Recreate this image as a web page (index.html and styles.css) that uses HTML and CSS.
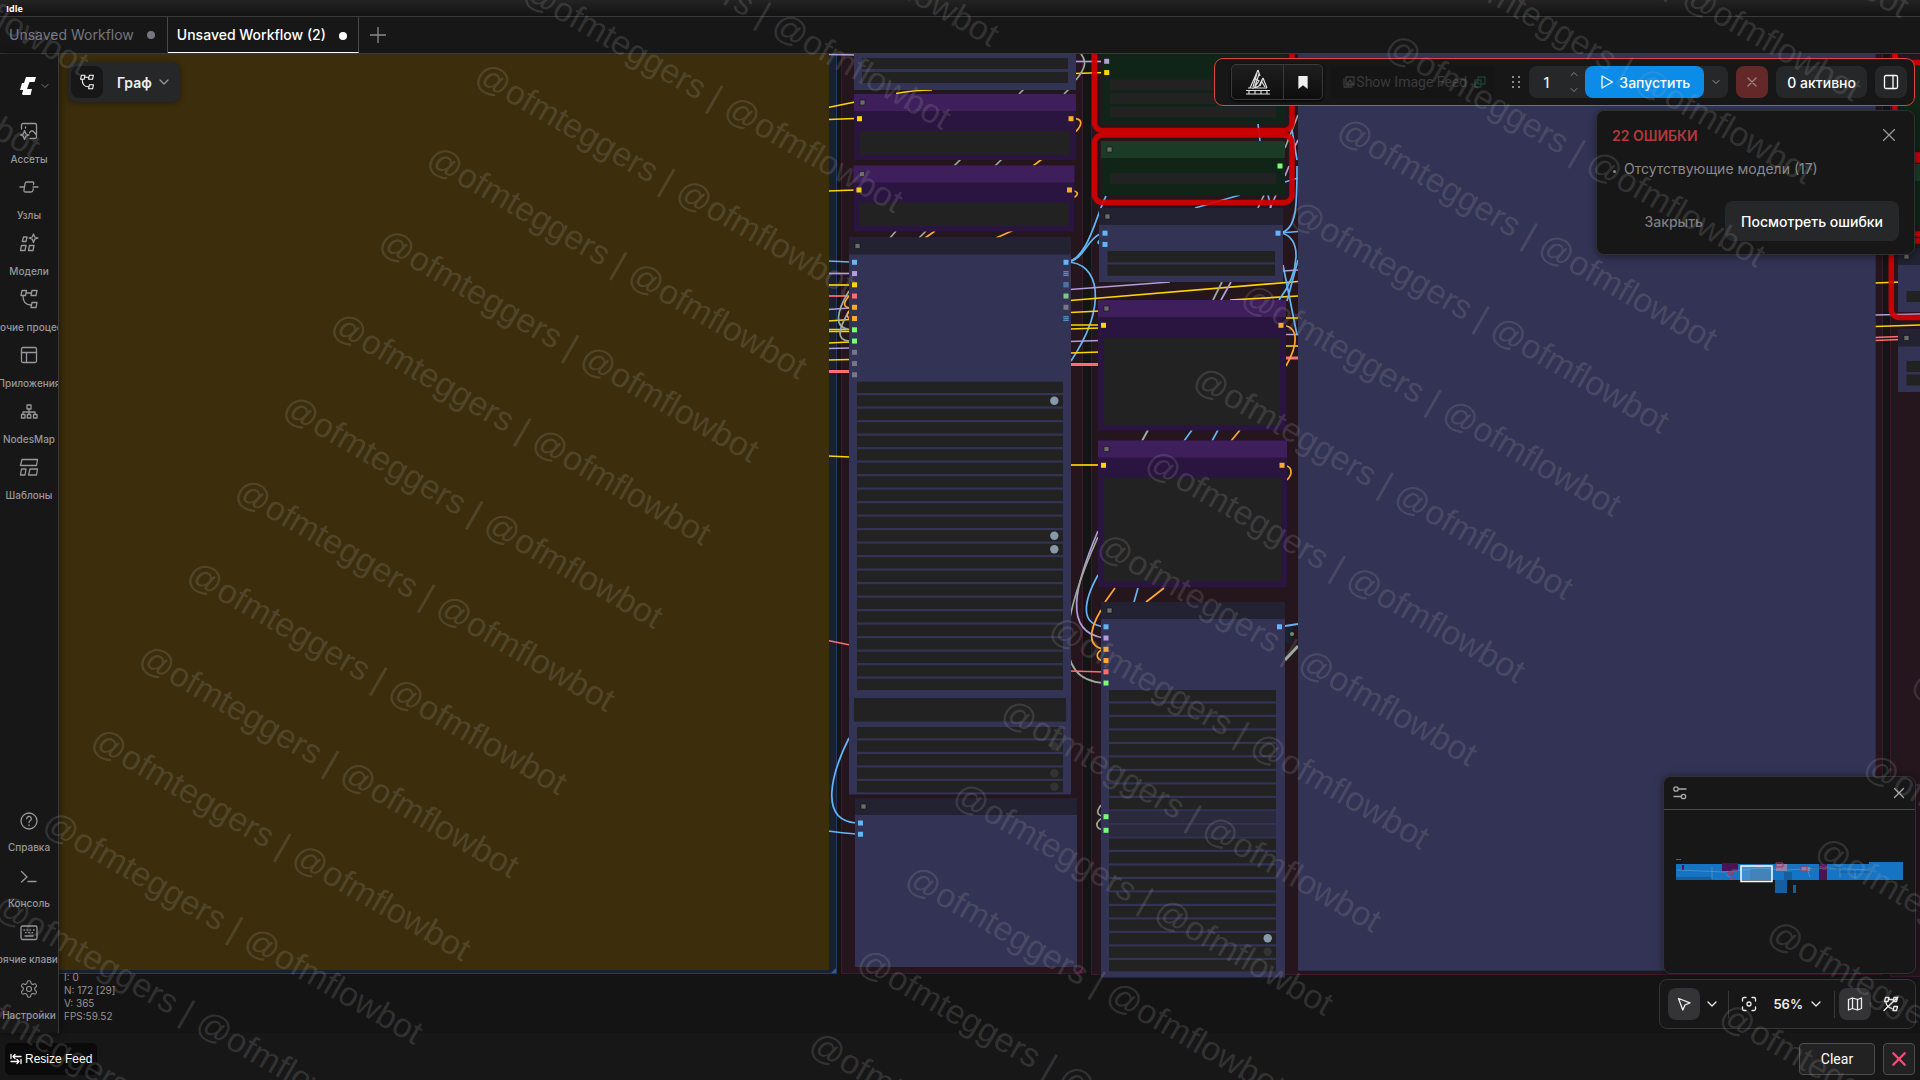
FILE: index.html
```html
<!DOCTYPE html>
<html lang="ru">
<head>
    <meta charset="UTF-8">
    <meta name="viewport" content="width=device-width, initial-scale=1.0">
    <title>Unsaved Workflow (2)</title>
    <link rel="stylesheet" href="styles.css">
</head>
<body>

    <div class="status-line">Idle</div>

    <nav class="tabs">
        <button class="tab">Unsaved Workflow <span class="dot"></span></button>
        <button class="tab active">Unsaved Workflow (2) <span class="dot"></span></button>
        <button class="tab-add" aria-label="Новая вкладка">
            <svg class="icon" viewBox="0 0 16 16"><path d="M8 0v16M0 8h16"/></svg>
        </button>
    </nav>

    <main class="workspace">
        <aside class="sidebar">
            <button class="logo" aria-label="Меню">
                <svg class="logo-mark" viewBox="0 0 16 18"><path d="M6 0h10l-1.500 5H9.500L7 12h5l-1.500 6H3l-1-1 1.200-4H0l2-7h2z"/></svg>
                <svg class="icon tiny" viewBox="0 0 8 8"><path d="M1 2.500l3 3 3-3"/></svg>
            </button>

            <button class="side-item">
                <svg class="icon" viewBox="0 0 20 20"><path d="M2.500 8V4a1.500 1.500 0 0 1 1.500-1.500h12A1.500 1.500 0 0 1 17.500 4v12a1.500 1.500 0 0 1-1.500 1.500H11M10.500 12c1-2.500 3-3 4.500-1l2.500 3M6.500 6v1M5.500 9.500L7 13 10 14 7 15.200 5.500 18.500 4.300 15.200 1.500 14 4.300 13z"/></svg>
                <span>Ассеты</span>
            </button>
            <button class="side-item">
                <svg class="icon" viewBox="0 0 20 20"><path d="M1 10h4M14 10h5M14.500 7.500L14.800 6a1 1 0 0 0-1-1H8a2 2 0 0 0-2 1.600L5 13a1.500 1.500 0 0 0 1.500 2H12a2 2 0 0 0 2-1.600l.3-1.400"/></svg>
                <span>Узлы</span>
            </button>
            <button class="side-item">
                <svg class="icon" viewBox="0 0 20 20"><path d="M4.500 4h3.500l-1 4.500H3.300zM2.500 12.500h4.500l-1 5H1.500zM10.500 12.500H15l-1 5H9.500zM14.500 1l1.200 3 3.300 1-3.300 1.200-1.200 3.300-1.200-3.300L10 5l3.300-1z"/></svg>
                <span>Модели</span>
            </button>
            <button class="side-item">
                <svg class="icon" viewBox="0 0 20 20"><path d="M3 1.500h4.500l-1 5H2zM13 1.500h5l-1 5h-5zM13 13.500h5l-1 5h-5zM7 4h5M4 7c0 5 2 9 8 9"/></svg>
                <span>Рабочие процессы</span>
            </button>
            <button class="side-item">
                <svg class="icon" viewBox="0 0 20 20"><rect x="2.500" y="2.500" width="15" height="15" rx="1.500"/><path d="M2.500 7.500h15M7.500 7.500v10"/></svg>
                <span>Приложения</span>
            </button>
            <button class="side-item">
                <svg class="icon" viewBox="0 0 20 20"><path d="M8 4h4v4H8zM2.500 13.500h3.500V17H2.500zM8.300 13.500h3.500V17H8.300zM14.500 13.500H18V17h-3.500zM10 8v5M4 13v-2h12v2"/></svg>
                <span>NodesMap</span>
            </button>
            <button class="side-item">
                <svg class="icon" viewBox="0 0 20 20"><path d="M3 2.500h15.500l-1 6H1.500zM2.500 12H7l-1 6H1.500zM11 12h7.500l-1 6H9.500z"/></svg>
                <span>Шаблоны</span>
            </button>

            <div class="side-bottom">
                <button class="side-item">
                    <svg class="icon" viewBox="0 0 20 20"><circle cx="10" cy="10" r="8"/><path d="M7.700 7.800a2.300 2.300 0 1 1 3.400 2c-.8.500-1.100.9-1.100 1.700M10 14v.6"/></svg>
                    <span>Справка</span>
                </button>
                <button class="side-item">
                    <svg class="icon" viewBox="0 0 20 20"><path d="M2.500 4.500L8 10l-5.500 5M9 14.500h8"/></svg>
                    <span>Консоль</span>
                </button>
                <button class="side-item">
                    <svg class="icon" viewBox="0 0 20 20"><rect x="2" y="3" width="16" height="13.500" rx="1.500"/><path d="M5 7h.6M8 7h.6M11 7h.6M14.500 7h.6M6.500 9.700h.6M9.700 9.700h.6M13 9.700h.6M6 13h8"/></svg>
                    <span>Горячие клавиши</span>
                </button>
                <button class="side-item">
                    <svg class="icon" viewBox="0 0 24 24"><path d="M12.200 2h-.4a2 2 0 0 0-2 2v.2a2 2 0 0 1-1 1.700l-.4.300a2 2 0 0 1-2 0l-.2-.1a2 2 0 0 0-2.700.7l-.2.400a2 2 0 0 0 .7 2.700l.2.100a2 2 0 0 1 1 1.700v.5a2 2 0 0 1-1 1.700l-.2.100a2 2 0 0 0-.7 2.700l.2.400a2 2 0 0 0 2.700.7l.2-.1a2 2 0 0 1 2 0l.4.300a2 2 0 0 1 1 1.700v.2a2 2 0 0 0 2 2h.4a2 2 0 0 0 2-2v-.2a2 2 0 0 1 1-1.700l.4-.3a2 2 0 0 1 2 0l.2.100a2 2 0 0 0 2.700-.7l.2-.4a2 2 0 0 0-.7-2.700l-.2-.1a2 2 0 0 1-1-1.700v-.5a2 2 0 0 1 1-1.700l.2-.1a2 2 0 0 0 .7-2.700l-.2-.4a2 2 0 0 0-2.700-.7l-.2.100a2 2 0 0 1-2 0l-.4-.3a2 2 0 0 1-1-1.700V4a2 2 0 0 0-2-2z"/><circle cx="12" cy="12" r="3"/></svg>
                    <span>Настройки</span>
                </button>
            </div>
        </aside>

        <section class="canvas">
            <svg class="graph" id="graph" aria-hidden="true"></svg>

            <div class="breadcrumb">
                <button class="crumb-icon" aria-label="Рабочий процесс">
                    <svg class="icon" viewBox="0 0 20 20"><path d="M3 1.500h4.500l-1 5H2zM13 1.500h5l-1 5h-5zM13 13.500h5l-1 5h-5zM7 4h5M4 7c0 5 2 9 8 9"/></svg>
                </button>
                <button class="crumb-name">Граф
                    <svg class="icon small" viewBox="0 0 12 12"><path d="M2 4l4 4 4-4"/></svg>
                </button>
            </div>

            <div class="stats">
                <div>I: 0</div>
                <div>N: 172 [29]</div>
                <div>V: 365</div>
                <div>FPS:59.52</div>
            </div>

            <div class="top-panels">
                <div class="actionbar">
                    <div class="group-dark">
                        <button aria-label="Crystools">
                            <svg class="art" viewBox="0 0 26 26"><path d="M13 1L5 19M13 1l2 6M12 4L8 18M14 5l-4 12M11 10l3 2-5 7 5-2 4-8-3 8M18 9l4 10M17 13l3 5M3 19h19M1 21.500h24M1 25h24M4 21v4M10 21v4M16 21v4M22 21v4"/></svg>
                        </button>
                        <button aria-label="Закладка">
                            <svg class="bookmark" viewBox="0 0 10 14"><path d="M0 0h10v14l-5-4-5 4z"/></svg>
                        </button>
                    </div>
                    <button class="feed-toggle">
                        <svg class="icon small" viewBox="0 0 12 12"><path d="M3 1h8v8H3zM1 3v8h8M4 8l3-4 3 4z"/></svg>Show Image Feed
                        <svg class="icon small feed-mark" viewBox="0 0 12 12"><path d="M4 1h7v7H4zM1 4h6v7H1z"/></svg>
                    </button>
                    <svg class="grip" viewBox="0 0 10 14"><path d="M1 1h2v2H1zM7 1h2v2H7zM1 6h2v2H1zM7 6h2v2H7zM1 11h2v2H1zM7 11h2v2H7z"/></svg>
                    <div class="run-group">
                        <input class="count" type="text" value="1" aria-label="Количество запусков">
                        <div class="spin">
                            <button aria-label="Больше"><svg class="icon tiny" viewBox="0 0 8 8"><path d="M1 5.500l3-3 3 3"/></svg></button>
                            <button aria-label="Меньше"><svg class="icon tiny" viewBox="0 0 8 8"><path d="M1 2.500l3 3 3-3"/></svg></button>
                        </div>
                        <button class="run">
                            <svg class="icon" viewBox="0 0 16 16"><path d="M3 2l10.500 6L3 14z"/></svg>Запустить
                        </button>
                        <button class="run-more" aria-label="Ещё"><svg class="icon tiny" viewBox="0 0 8 8"><path d="M1 2.500l3 3 3-3"/></svg></button>
                    </div>
                    <button class="stop" aria-label="Остановить"><svg class="icon small" viewBox="0 0 12 12"><path d="M2 2l8 8M10 2l-8 8"/></svg></button>
                    <button class="active-jobs">0 активно</button>
                    <button class="panel-btn" aria-label="Панель"><svg class="icon" viewBox="0 0 16 16"><rect x="1.500" y="1.500" width="13" height="13" rx="1.500"/><path d="M10 1.500v13"/></svg></button>
                </div>

                <div class="error-box">
                    <div class="error-head">
                        <h2>22 ОШИБКИ</h2>
                        <button aria-label="Закрыть"><svg class="icon small" viewBox="0 0 12 12"><path d="M.5.500l11 11M11.500.500l-11 11"/></svg></button>
                    </div>
                    <ul>
                        <li>Отсутствующие модели (17)</li>
                    </ul>
                    <div class="error-actions">
                        <button class="dismiss">Закрыть</button>
                        <button class="view">Посмотреть ошибки</button>
                    </div>
                </div>
            </div>

            <div class="bottom-panels">
                <div class="minimap">
                    <div class="minimap-head">
                        <button aria-label="Параметры"><svg class="icon" viewBox="0 0 16 16"><circle cx="4" cy="4" r="2.200"/><circle cx="11.500" cy="11.500" r="2.200"/><path d="M6.500 4H14M2 11.500h7"/></svg></button>
                        <button aria-label="Закрыть"><svg class="icon small" viewBox="0 0 12 12"><path d="M1.500 1.500l9 9M10.500 1.500l-9 9"/></svg></button>
                    </div>
                    <svg class="map" viewBox="0 0 251 163">
                        <g fill="#1574c4">
                            <path d="M12 49h5v1h-5zM12 54h193v16H12zM205 52h34v18h-34z"/>
                        </g>
                        <path fill="#155f9e" d="M12 67h36v3H12zM86 56h22v14H86zM111 70h12v13h-12zM129 75h3v8h-3zM120 62h8v8h-8z"/>
                        <path fill="#4a1454" d="M58 53h16v8H58zM155 54h8v16h-8zM18 55h2v5h-2z"/>
                        <path fill="#8d7fa6" d="M112 54h11v7h-11zM137 57h9v4h-9z"/>
                        <path d="M13 60L60 62 95 58 120 60 160 58 205 60M48 57v12M62 64l6 5M143 58l3 9M176 56v12M191 60v9" stroke="#6f9fc4" stroke-width=".6" fill="none"/>
                        <path d="M64 62h5v3h-5zM68 60h6M66 68h6M91 55h7M112 53h7v4h-7zM137 56h6v5h-6zM156 56l6 3M158 59h4" stroke="#b0305a" stroke-width="1" fill="none"/>
                        <path d="M148 58h30M176 62h30" stroke="#2a5273" stroke-width=".8"/>
                        <rect x="77" y="56" width="31" height="15.500" fill="#86b9e3" fill-opacity=".4" stroke="#fff" stroke-width="1.500"/>
                    </svg>
                </div>

                <div class="controls">
                    <button class="tool on" aria-label="Выбор"><svg class="icon" viewBox="0 0 16 16"><path d="M2.500 2.500l11.500 4.300-5 2.200-2.200 5z"/></svg></button>
                    <button class="caret" aria-label="Режим"><svg class="icon small" viewBox="0 0 12 12"><path d="M2 4l4 4 4-4"/></svg></button>
                    <span class="sep"></span>
                    <button class="tool" aria-label="Вписать"><svg class="icon" viewBox="0 0 16 16"><path d="M1.500 5V3A1.500 1.500 0 0 1 3 1.500h2M11 1.500h2A1.500 1.500 0 0 1 14.500 3v2M14.500 11v2a1.500 1.500 0 0 1-1.500 1.500h-2M5 14.500H3A1.500 1.500 0 0 1 1.500 13v-2"/><circle cx="8" cy="8" r="2"/></svg></button>
                    <button class="zoom">56% <svg class="icon small" viewBox="0 0 12 12"><path d="M2 4l4 4 4-4"/></svg></button>
                    <span class="sep"></span>
                    <button class="tool on" aria-label="Миникарта"><svg class="icon" viewBox="0 0 16 16"><path d="M1.500 3.500L5.500 2l5 1.500 4-1.500v10.500l-4 1.500-5-1.500-4 1.500zM5.500 2v10.500M10.500 3.500V14"/></svg></button>
                    <button class="tool links" aria-label="Скрыть связи"><svg class="icon" viewBox="0 0 16 16"><path d="M2.500 1.500h3.500l-1 4H1.500zM11 1.500h3.500l-1 4H10zM11 10.500h3.500l-1 4H10zM5.500 3.500H10M3 6c0 3 1 5 6 6.500M15 1L1 14.500"/></svg></button>
                </div>
            </div>
        </section>
    </main>

    <footer class="feed-bar">
        <button class="resize">
            <svg class="icon small" viewBox="0 0 12 12"><path d="M1 1.500v4M11 3.500H3M5 1.500l-2 2 2 2M11 6.500v4M1 8.500h8M7 6.500l2 2-2 2"/></svg>
            Resize Feed
        </button>
        <div class="feed-actions">
            <button class="clear">Clear</button>
            <button class="close" aria-label="Закрыть ленту"><svg class="icon" viewBox="0 0 14 14"><path d="M2 2l10 10M12 2L2 12"/></svg></button>
        </div>
    </footer>

    <div class="watermark" aria-hidden="true"><div class="marks" id="marks"></div></div>

    <script src="graph.js"></script>
</body>
</html>
```
FILE: styles.css
```css
* {
    box-sizing: border-box;
}
body {
    margin: 0;
    height: 100vh;
    display: flex;
    flex-direction: column;
    overflow: hidden;
    position: relative;
    background: #171718;
    color: #fff;
    font-family: Inter, "Noto Sans", sans-serif;
    font-size: 14px;
}
button {
    display: flex;
    align-items: center;
    justify-content: center;
    padding: 0;
    border: none;
    background: none;
    color: inherit;
    font: inherit;
    white-space: nowrap;
    cursor: pointer;
}
svg {
    flex: none;
}
.icon {
    width: 16px;
    height: 16px;
    fill: none;
    stroke: currentColor;
    stroke-width: 1.3;
    stroke-linecap: round;
    stroke-linejoin: round;
}
.icon.small {
    width: 12px;
    height: 12px;
}
.icon.tiny {
    width: 8px;
    height: 8px;
    stroke-width: 1;
}

/* header */
.status-line {
    height: 16px;
    padding-left: 6px;
    background: linear-gradient(#232323, #131313);
    font: bold 9px/17px "Open Sans", sans-serif;
}
.tabs {
    display: flex;
    height: 38px;
    border-top: 1px solid #3a3a3c;
    border-bottom: 1px solid #3a3a3c;
}
.tab {
    gap: 12px;
    padding: 0 11px 2px 9px;
    border-right: 1px solid #4a4a4d;
    color: #76767e;
}
.tab.active {
    padding: 0 10px 0 9px;
    color: #fff;
    font-weight: 500;
    border-bottom: 1px solid #fff;
}
.dot {
    width: 8px;
    height: 8px;
    margin: 2px 1px 0;
    border-radius: 50%;
    background: currentColor;
}
.tab-add {
    width: 38px;
    color: #8a8a8a;
}

/* sidebar */
.workspace {
    flex: 1;
    display: flex;
    min-height: 0;
}
.sidebar {
    width: 59px;
    display: flex;
    flex-direction: column;
    border-right: 1px solid #39393c;
    box-shadow: 0 0 8px rgba(0, 0, 0, 0.6);
    z-index: 1;
}
.logo {
    height: 64px;
    gap: 5px;
    padding-left: 11px;
    color: #777;
}
.logo-mark {
    width: 16px;
    height: 18px;
    fill: #fff;
}
.side-item {
    height: 56px;
    width: 100%;
    flex-direction: column;
    justify-content: flex-start;
    gap: 11px;
    padding-top: 3px;
    overflow: hidden;
    color: #98989a;
    font-size: 10px;
    font-weight: 500;
    line-height: 14px;
}
.side-item .icon {
    width: 20px;
    height: 20px;
}
.side-bottom {
    margin-top: auto;
    padding-bottom: 1px;
}
.side-bottom .side-item {
    gap: 9px;
}

/* canvas */
.canvas {
    flex: 1;
    position: relative;
    min-width: 0;
    overflow: hidden;
    background: #141414;
}
.graph {
    position: absolute;
    width: 100%;
    height: 100%;
}
.breadcrumb {
    position: absolute;
    top: 8px;
    left: 9px;
    display: flex;
    align-items: center;
    padding: 4px 4px 4px 3px;
    border-radius: 8px;
    background: #262729;
    box-shadow: 0 1px 6px rgba(0, 0, 0, 0.4);
}
.crumb-icon {
    width: 32px;
    height: 32px;
    border-radius: 8px;
    background: #171718;
}
.crumb-name {
    gap: 6px;
    padding: 0 6px 0 14px;
    color: #eee;
    font-size: 14px;
    font-weight: 600;
}
.crumb-name .icon {
    color: #999;
}
.stats {
    position: absolute;
    left: 5px;
    bottom: 10px;
    color: #949494;
    font-size: 10px;
    line-height: 13px;
}

/* floating panels at the top */
.top-panels {
    position: absolute;
    top: 4px;
    right: 5px;
    display: flex;
    flex-direction: column;
    align-items: flex-end;
    gap: 4px;
}
.actionbar {
    height: 48px;
    display: flex;
    align-items: center;
    gap: 8px;
    padding: 0 7px 0 16px;
    border: 1px solid #d9453f;
    border-radius: 9px;
    background: #171718;
    font-weight: 500;
}
.actionbar button {
    height: 32px;
}
.group-dark {
    display: flex;
    border: 1px solid #3a3a3a;
    border-radius: 5px;
    background: linear-gradient(#1e1e1e, #0d0d0d);
    box-shadow: 0 1px 3px #000;
}
.actionbar .group-dark button {
    width: 38px;
    height: 34px;
}
.actionbar .group-dark button:first-child {
    width: 52px;
    border-right: 1px solid #3a3a3a;
}
.art {
    width: 26px;
    height: 26px;
    fill: none;
    stroke: #ddd;
    stroke-width: 1.2;
}
.bookmark {
    width: 10px;
    height: 13px;
    fill: #eee;
}
.feed-toggle {
    width: 163px;
    justify-content: flex-start;
    padding-left: 12px;
    gap: 1px;
    border-radius: 4px;
    background: #151516;
    color: #3b3b3b;
    font: 14px Roboto, sans-serif;
}
.feed-mark {
    margin-left: 6px;
    color: #1d3f35;
}
.grip {
    width: 10px;
    height: 14px;
    margin: 0 0 0 9px;
    fill: #8a8a8a;
}
.run-group {
    display: flex;
    align-items: center;
    border-radius: 8px;
    background: #262729;
    overflow: hidden;
}
.count {
    width: 34px;
    height: 32px;
    padding: 0;
    border: none;
    background: none;
    color: #eee;
    font: inherit;
    text-align: center;
}
.spin {
    width: 22px;
    display: flex;
    flex-direction: column;
    align-items: center;
    color: #888;
}
.actionbar .spin button {
    width: 20px;
    height: 16px;
}
.run {
    width: 119px;
    gap: 4px;
    border-radius: 8px;
    background: #0b8ce9;
}
.run-more {
    width: 24px;
    color: #999;
}
.stop {
    width: 32px;
    border-radius: 8px;
    background: #642828;
    color: #a08080;
}
.active-jobs {
    padding: 0 11px;
    border-radius: 8px;
    background: #262729;
}
.panel-btn {
    width: 32px;
    border-radius: 8px;
    background: #262729;
}
.error-box {
    width: 319px;
    padding: 12px 15px 13px;
    border: 1px solid #303032;
    border-radius: 8px;
    background: #171718;
    box-shadow: 0 2px 8px rgba(0, 0, 0, 0.4);
}
.error-head {
    display: flex;
    align-items: center;
    justify-content: space-between;
    height: 24px;
}
.error-head h2 {
    margin: 0;
    color: #b33a3a;
    font-size: 14px;
    font-weight: 600;
}
.error-head button {
    width: 20px;
    height: 24px;
    color: #999;
}
.error-box ul {
    margin: 12px 0 22px;
    padding-left: 12px;
    color: #8a8a8a;
    line-height: 20px;
}
.error-box li {
    list-style: none;
    position: relative;
}
.error-box li::before {
    content: "";
    position: absolute;
    left: -11px;
    top: 11px;
    width: 3px;
    height: 3px;
    border-radius: 50%;
    background: currentColor;
}
.error-actions {
    display: flex;
    justify-content: flex-end;
    gap: 6px;
}
.error-actions button {
    height: 40px;
    padding: 0 16px;
    border-radius: 8px;
    font-weight: 500;
}
.error-actions .dismiss {
    color: #7d7d7f;
}
.error-actions .view {
    background: #262729;
}

/* floating panels at the bottom */
.bottom-panels {
    position: absolute;
    right: 4px;
    bottom: 4px;
    display: flex;
    flex-direction: column;
    align-items: flex-end;
    gap: 5px;
}
.minimap {
    width: 253px;
    border: 1px solid #303032;
    border-radius: 8px;
    background: #171718;
    box-shadow: 0 0 8px rgba(0, 0, 0, 0.4);
    overflow: hidden;
}
.minimap-head {
    height: 33px;
    display: flex;
    align-items: center;
    justify-content: space-between;
    padding: 0 10px 0 8px;
    border-bottom: 1px solid #4a4a4c;
    color: #aaa;
}
.map {
    display: block;
    width: 100%;
}
.controls {
    display: flex;
    align-items: center;
    height: 50px;
    padding: 0 8px;
    border: 1px solid #353537;
    border-radius: 8px;
    background: #171718;
    color: #eee;
}
.tool {
    width: 32px;
    height: 32px;
    border-radius: 8px;
}
.tool.on {
    background: #343436;
}
.tool.links {
    margin-left: 4px;
}
.caret {
    width: 24px;
    height: 32px;
}
.sep {
    width: 1px;
    height: 27px;
    margin: 0 4px;
    background: #38383a;
}
.zoom {
    gap: 7px;
    padding: 0 8px;
    height: 32px;
    font-size: 13px;
    font-weight: 600;
}

/* image feed bar */
.feed-bar {
    height: 47px;
    display: flex;
    align-items: center;
    justify-content: space-between;
    padding: 4px 5px 0;
    font-family: Roboto, "DejaVu Sans", sans-serif;
}
.resize {
    height: 32px;
    padding: 0 5px;
    gap: 3px;
    border-radius: 5px;
    background: #0a0a0a;
    font-family: "Liberation Sans", "DejaVu Sans", sans-serif;
    font-size: 12px;
}
.feed-actions {
    display: flex;
    gap: 8px;
}
.feed-actions button {
    height: 32px;
    border: 1px solid #4e4e4e;
    border-radius: 4px;
    background: #222;
}
.clear {
    width: 76px;
}
.close {
    width: 32px;
    color: #ff4a78;
}
.close .icon {
    stroke-width: 2;
}

/* repeated diagonal marks over the whole page */
.watermark {
    position: absolute;
    inset: 0;
    overflow: hidden;
    pointer-events: none;
    z-index: 5;
}
.marks {
    position: absolute;
    top: -1090px;
    left: -324px;
    display: grid;
    grid-template-columns: repeat(4, 774px);
    grid-auto-rows: 96px;
    transform: rotate(30deg);
    transform-origin: 324px 1090px;
    color: rgba(170, 170, 170, 0.2);
    font: 34px/96px "Liberation Sans", Arial, sans-serif;
    white-space: nowrap;
}
```
FILE: graph.js
```js
const NS = "http://www.w3.org/2000/svg";
const graph = document.getElementById("graph");
const root = document.createElementNS(NS, "g");
root.setAttribute("transform", "translate(-59 -54)");
graph.appendChild(root);

const C = {
    blue: "#64b5f6", lilac: "#b39ddb", yellow: "#ffd500", red: "#ff6e6e", orange: "#ffa931",
    green: "#77ff77", leaf: "#81c784", gray: "#777788", ash: "#9cab9b"
};

function add(tag, attrs) {
    const el = document.createElementNS(NS, tag);
    for (const key in attrs) el.setAttribute(key, attrs[key]);
    root.appendChild(el);
}

function rect(x1, y1, x2, y2, fill, extra) {
    add("rect", Object.assign({ x: x1, y: y1, width: x2 - x1, height: y2 - y1, fill: fill }, extra));
}

function link(color, d, width) {
    add("path", { d: d, fill: "none", stroke: C[color], "stroke-width": width || 1.7 });
}

function slot(color, x, y) {
    rect(x - 2.5, y - 2.5, x + 2.5, y + 2.5, C[color]);
}

function slots(x, y, colors) {
    colors.forEach((c, i) => slot(c, x, y + i * 11.25));
}

// node themes: [title, body]
const THEME = {
    navy: ["#222232", "#333355"],
    purple: ["#3e1f5c", "#291540"],
    green: ["#1c3b26", "#102418"]
};

function node(theme, x1, y1, x2, y2, title) {
    rect(x1, y1, x2, y2, THEME[theme][1]);
    if (title) {
        rect(x1, y1, x2, y1 + 17, THEME[theme][0]);
        rect(x1 + 6, y1 + 6, x1 + 11, y1 + 11, "#6c6c6c", { stroke: "#111", "stroke-width": 0.6 });
    }
}

function widget(x1, y1, x2, y2) {
    rect(x1, y1, x2, y2, "#222222");
}

function widgets(x1, x2, y, count) {
    for (let i = 0; i < count; i++) widget(x1, y + i * 13.5, x2, y + i * 13.5 + 11.3);
}

function toggle(x, y, on) {
    add("circle", { cx: x, cy: y, r: 4.2, fill: on ? "#8899aa" : "#333333" });
}

function outline(x1, y1, x2, y2) {
    rect(x1, y1, x2, y2, "none", { rx: 8, stroke: "#d40000", "stroke-width": 5.5, "stroke-opacity": 0.92 });
}

// groups
rect(0, 40, 836.5, 973.5, "#1a212d", { stroke: "#233a68" });
add("path", { d: "M836 968v5h-5z", fill: "#34589c" });
rect(841.5, 40, 1082.500, 973.5, "#25151c", { stroke: "#3d1830" });
add("path", { d: "M1082 968v5h-5z", fill: "#6b1d4c" });
rect(1091.5, 40, 1882.5, 974.5, "#25151c", { stroke: "#3d1830" });
rect(1890.5, 40, 1940, 976.5, "#25151c", { stroke: "#3d1830" });

// links left of the first column
link("lilac", "M828 54.500L855 55");
link("yellow", "M828 107.500L855 102");
link("yellow", "M828 119.500L855 118.500");
link("yellow", "M828 191L855 190");
link("blue", "M828 261L850 262");
link("lilac", "M828 273.500H850");
link("yellow", "M828 285H850");
link("red", "M828 296H850");
link("lilac", "M828 309.500L850 308");
link("yellow", "M828 321L850 319.500");
link("yellow", "M828 329.500H850M828 331.500H850", 1.3);
link("yellow", "M828 343L850 342");
link("lilac", "M828 348.500L850 348");
link("yellow", "M828 360L850 359.500");
link("red", "M828 371.500H850", 3);
link("yellow", "M828 456L850 457");
link("red", "M828 640.500L850 645");
link("ash", "M849 291C836 312 834 328 849 329.500");
link("ash", "M849 311C838 330 836 340 849 341");
link("orange", "M849 296C842 304 844 307 850 308");
link("orange", "M849 311Q845 316 850 319");
link("blue", "M849 738C832 772 818 820 856 823");
link("blue", "M828 831Q842 833 856 834");

// links between the columns
link("lilac", "M1075 61.500H1105");
link("yellow", "M1075 73.500L1105 72.500");
link("ash", "M1081 54C1088 62 1084 70 1076 80");
link("orange", "M1071 118.500C1083 118 1083 124 1076 131.500");
link("orange", "M1069 190C1079 191 1079 194 1074 197.500");
link("blue", "M1066 262C1088 260 1096 215 1106 196");
link("blue", "M1066 262C1084 261 1086 240 1100 234");
link("blue", "M1066 262C1100 262 1108 305 1071 361");
link("blue", "M1100 240Q1096 243 1100 244");
link("lilac", "M1070 289.500L1170 282");
link("yellow", "M1070 300.500L1298 281.500");
link("yellow", "M1070 312.500L1100 311");
link("yellow", "M1230 300L1298 296");
link("yellow", "M1070 325H1100M1070 329L1100 328");
link("lilac", "M1070 341.500L1100 340.500");
link("yellow", "M1070 353L1100 352");
link("red", "M1070 364.500H1100", 3);
link("yellow", "M1070 465H1100");
link("lilac", "M1098 531C1075 585 1062 632 1104 638");
link("ash", "M1098 537C1065 610 1048 680 1104 683");
link("blue", "M1098 575C1083 602 1080 625 1104 626.500");
link("orange", "M1101 610C1088 632 1088 647 1104 649");
link("orange", "M1104 649C1095 652 1095 659 1104 661");
link("red", "M1070 671L1104 672");
link("ash", "M1101 805C1095 813 1098 815 1104 817C1094 822 1095 829 1104 830");

// bits that show between stacked nodes
link("yellow", "M896 93.500Q915 90 932 90");
link("ash", "M1019 94l5-5M1064 94l5-5M954 166l7-7M995 166l7-7M890 238l6-7M919 238l7-7");
link("orange", "M1033 166l9-7M925 238l10-7M996 238l18-8");
link("blue", "M1195 208L1240 195M1268 195l3 13M1258 124l2 17");
link("ash", "M1258 208l6-13M1213 300l9-18");
link("lilac", "M1270 208l6-13M1221 300l10-18");
link("ash", "M1142 441l6-11", 2);
link("blue", "M1184 441l8-11M1212 441l6-11M1134 602l4-14");
link("orange", "M1231 441l9-11M1105 602l10-14M1146 602l18-14");

// links right of the second column
link("blue", "M1280 233C1297 230 1297 205 1297 166M1280 233L1298 231.500M1280 233C1303 236 1300 272 1279 300");
link("blue", "M1285 182L1298 178M1283 265L1297 335M1287 301L1298 260M1292 130L1297 160");
link("ash", "M1298 115L1285 148");
link("lilac", "M1285 176L1289 166M1294 148L1298 140M1283 271L1298 270M1285 334.500H1298");
link("yellow", "M1285 318H1298M1285 346H1298");
link("red", "M1285 358H1298", 3);
link("orange", "M1281 325C1300 326 1298 345 1286 366");
link("orange", "M1282 465.500C1293 465 1293 474 1287 480");
rect(1284, 626, 1292, 643, "#1a212d");
link("blue", "M1285 626L1298 624", 2);
link("ash", "M1298 646L1285 660", 3);
add("circle", { cx: 1292, cy: 634, r: 2, fill: "#6b9068" });

link("yellow", "M1875 283L1900 282");
link("lilac", "M1875 315L1920 314");
link("yellow", "M1875 326.500L1920 325");
link("red", "M1875 337.500L1900 336.500M1875 340.500L1900 339.500");

// first column
rect(0, 40, 829, 970, "#3c2e0c");

node("navy", 854, 40, 1076, 90);
widget(862, 58, 1068, 69);
widget(862, 72, 1068, 83);

node("purple", 854, 94, 1076, 160, true);
widget(859.5, 131, 1070, 155);
slot("yellow", 859.5, 118.7);
slot("orange", 1071, 118.7);

node("purple", 853.5, 165.5, 1074.5, 231.5, true);
widget(859, 202.5, 1069, 226);
slot("yellow", 859, 190);
slot("orange", 1069.5, 190);

node("navy", 849, 237.500, 1071, 794.5, true);
slots(854.5, 262.3, ["blue", "lilac", "yellow", "red", "orange", "orange", "green", "green", "gray", "gray", "gray"]);
slots(1066, 262.3, ["blue", "blue", "blue", "leaf", "gray", "blue"]);
// list outputs are drawn as a 3x3 grid
[273.5, 285, 318.5].forEach(y => {
    add("path", { d: `M1063 ${y - 1}h6M1063 ${y + 1}h6M1065 ${y - 3}v6M1067 ${y - 3}v6`, stroke: "#333355", "stroke-width": 0.6 });
});
widgets(857, 1063, 381.7, 23);
toggle(1054.3, 400.7, true);
toggle(1054.3, 535.7, true);
toggle(1054.3, 549.2, true);
widget(854, 698, 1066, 721.5);
widgets(857, 1063, 727, 5);
toggle(1054.3, 746.3);
toggle(1054.3, 773.3);
toggle(1054.3, 786.8);

node("navy", 855, 798, 1077, 967, true);
slots(860.5, 823, ["blue", "blue"]);

// second column
node("green", 1101, 40, 1285, 124);
widget(1110, 79.5, 1276, 90.5);
widget(1110, 93, 1276, 104);
widget(1110, 106.5, 1276, 117.5);
slots(1106.7, 61.3, ["lilac", "yellow"]);
outline(1094.5, 30, 1292, 130.5);

node("green", 1101, 141, 1285, 195.5, true);
widget(1110, 173, 1276, 184);
slot("green", 1280, 166);
outline(1094.5, 135, 1292, 202.5);

node("navy", 1099, 208, 1283, 282, true);
slots(1105, 233.2, ["blue", "blue"]);
slot("blue", 1278, 233.2);
widgets(1107.5, 1275, 251, 2);

node("purple", 1098, 300, 1286, 430.5, true);
widget(1103.5, 337.5, 1280, 425);
slot("yellow", 1103.5, 325.3);
slot("orange", 1281, 325.3);

node("purple", 1098, 440.500, 1287, 587.5, true);
widget(1103.5, 477.5, 1281, 581.5);
slot("yellow", 1103.5, 465.3);
slot("orange", 1282, 465.3);

node("navy", 1101, 602, 1285, 977.5, true);
slots(1106, 626.8, ["blue", "lilac", "orange", "orange", "red", "green"]);
slot("blue", 1279.5, 626.8);
widgets(1109, 1276, 690, 21);
rect(1109, 811.3, 1276, 822.8, "#2a2a3c");
rect(1109, 824.8, 1276, 836.3, "#2a2a3c");
slot("green", 1106, 816.7);
slot("green", 1106, 830.3);
toggle(1267.7, 938.3, true);
toggle(1267.7, 951.8);

rect(1298, 40, 1875.7, 970.7, "#333355");

// nodes cut by the right edge
outline(1895, 30, 1960, 62.5);
node("green", 1902, 66, 1940, 150);
outline(1895, 40, 1960, 155);
node("green", 1902, 164, 1940, 226, true);
outline(1895, 160, 1960, 234);
node("navy", 1898, 248, 1940, 312, true);
widget(1906.5, 291, 1940, 302);
outline(1891.3, 241, 1960, 317.5);
node("navy", 1898, 329.500, 1940, 392, true);
widget(1906.5, 361, 1940, 372);
widget(1906.5, 374.5, 1940, 385.5);

// diagonal marks
const marks = document.getElementById("marks");
for (let i = 0; i < 88; i++) {
    const mark = document.createElement("span");
    mark.textContent = "@ofmteggers | @ofmflowbot";
    marks.appendChild(mark);
}
```
